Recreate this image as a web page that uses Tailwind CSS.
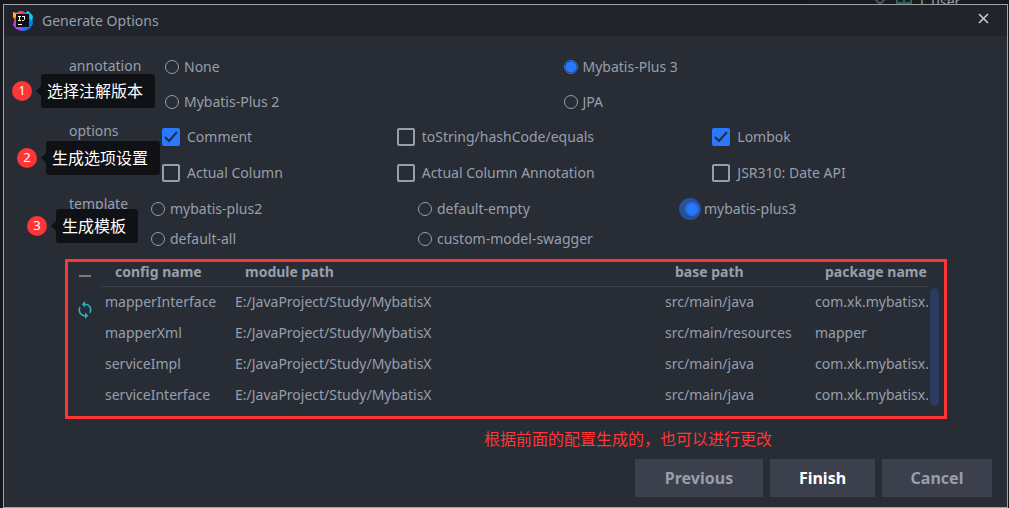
<!DOCTYPE html>
<html lang="zh-CN">
<head>
  <meta charset="UTF-8">
  <meta name="viewport" content="width=device-width, initial-scale=1.0">
  <title>Generate Options</title>
  <script src="https://cdn.jsdelivr.net/npm/@tailwindcss/browser@4"></script>
  <style>
    body {
      font-family: 'Noto Sans', 'Noto Sans CJK SC', sans-serif;
    }
    .radio {
      appearance: none;
      flex: none;
      width: 14px;
      height: 14px;
      border: 1px solid #979fad;
      border-radius: 50%;
    }
    .radio:checked {
      border-color: #2979ff;
      background: radial-gradient(circle, #2979ff 5px, transparent 6px);
    }
    .radio.focused {
      box-shadow: -2px 0 0 4px #27519d;
      background-color: #27519d;
    }
    .check {
      appearance: none;
      width: 18px;
      height: 18px;
      border: 2px solid #979fad;
      border-radius: 2px;
    }
    .check:checked {
      border-color: #2979ff;
      background: #2979ff;
    }
    /* callout bubbles */
    .tip::before {
      content: '';
      position: absolute;
      left: -5px;
      top: 12px;
      border: 5px solid transparent;
      border-left: 0;
      border-right-color: #101114;
    }
  </style>
</head>
<body class="flex min-h-screen flex-col overflow-hidden bg-[#15171c] pt-1 pr-px pl-[3px] text-sm leading-5 text-[#979fad]">
  <!-- editor tree behind the dialog -->
  <div class="absolute top-0 right-0 left-[808px] h-1 overflow-hidden bg-[#191b20]" aria-hidden="true">
    <svg class="absolute top-0 left-[66px] h-1 w-10" viewBox="0 0 40 4" fill="none" stroke-width="2">
      <path d="M1-1l5 5 5-5" stroke="#50535a" />
      <path d="M23 0v4M30 0v4M37 0v4M22 3h16" stroke="#2c6158" />
    </svg>
    <span class="absolute -top-2 left-28">t_user</span>
  </div>

  <div class="relative flex flex-1 flex-col border border-[#a3a3a5] bg-[#282c34]" role="dialog" aria-labelledby="title">
    <header class="flex h-[31px] items-center bg-[#21242b] pr-[14px] pl-2">
      <svg class="h-[22px] w-[22px]" viewBox="0 0 22 22">
        <path d="M1 2l4 1 3-2 6 2-4 14-8-3 1-4-2-3z" fill="#fc801d" />
        <path d="M1 2l3 2 2-2 1 3-4 3-2-1z" fill="#fdb42b" />
        <path d="M6 2l5-1 3 3-8 5-2 6-3 1 1-5z" fill="#fb3a6c" />
        <path d="M1 15l4-6 7 8 2 3-4 1-6-2z" fill="#9a4cf0" />
        <path d="M12 3l4-2 4 4 1 9-4 5-5 2-3-4z" fill="#087cfa" />
        <path d="M14 3l2-2 5 5-1 5-4-4z" fill="#12c7e8" />
        <path d="M4 4h13v13H4z" fill="#101010" />
        <path d="M6 6.500h3M7.500 6v5M6 10.500h3M10 6.500h3M12.500 6v3.500l-1 1H10M6 14.500h4" fill="none" stroke="#fff" />
      </svg>
      <h1 id="title" class="ml-2">Generate Options</h1>
      <button type="button" aria-label="Close" class="ml-auto -mt-1 p-1">
        <svg class="h-[11px] w-[11px]" viewBox="0 0 11 11" fill="none" stroke="#c9cdd4" stroke-width="1.500"><path d="M1 1l9 9M10 1l-9 9" /></svg>
      </button>
    </header>

    <form class="flex flex-1 flex-col pt-[13px] text-sm">
      <fieldset class="relative flex pr-[45px] pl-[65px]">
        <legend class="float-left w-24 pt-[7px]">annotation</legend>
        <div class="grid flex-1 auto-rows-[35px] grid-cols-2 items-center">
          <label class="flex items-center gap-[5px]"><input type="radio" name="annotation" class="radio">None</label>
          <label class="flex items-center gap-[5px]"><input type="radio" name="annotation" class="radio" checked>Mybatis-Plus 3</label>
          <label class="flex items-center gap-[5px]"><input type="radio" name="annotation" class="radio">Mybatis-Plus 2</label>
          <label class="flex items-center gap-[5px]"><input type="radio" name="annotation" class="radio">JPA</label>
        </div>
        <div class="absolute top-[25px] left-2 flex items-center gap-[9px] text-white">
          <span class="h-5 w-5 rounded-full bg-[#ff3636] text-center text-[13px]">1</span>
          <span class="tip relative rounded-[3px] bg-[#101114] py-[7px] pr-3 pl-[6px] text-base leading-5">选择注解版本</span>
        </div>
      </fieldset>

      <fieldset class="relative flex pr-[43px] pl-[65px]">
        <legend class="float-left w-[93px] pt-[2px]">options</legend>
        <div class="grid flex-1 auto-rows-[36px] grid-cols-[235fr_316fr_252fr] items-center">
          <label class="flex items-center gap-[7px]">
            <span class="relative flex"><input type="checkbox" class="check" checked><svg class="absolute top-[3px] left-[2px] h-3 w-[14px]" viewBox="0 0 14 12" fill="none" stroke="#282c34" stroke-width="2"><path d="M1 6l4 4 8-9" /></svg></span>Comment
          </label>
          <label class="flex items-center gap-[7px]"><input type="checkbox" class="check">toString/hashCode/equals</label>
          <label class="flex items-center gap-[7px]">
            <span class="relative flex"><input type="checkbox" class="check" checked><svg class="absolute top-[3px] left-[2px] h-3 w-[14px]" viewBox="0 0 14 12" fill="none" stroke="#282c34" stroke-width="2"><path d="M1 6l4 4 8-9" /></svg></span>Lombok
          </label>
          <label class="flex items-center gap-[7px]"><input type="checkbox" class="check">Actual Column</label>
          <label class="flex items-center gap-[7px]"><input type="checkbox" class="check">Actual Column Annotation</label>
          <label class="flex items-center gap-[7px]"><input type="checkbox" class="check">JSR310: Date API</label>
        </div>
        <div class="absolute top-[22px] left-[13px] flex items-center gap-[9px] text-white">
          <span class="h-5 w-5 rounded-full bg-[#ff3636] text-center text-[13px]">2</span>
          <span class="tip relative rounded-[3px] bg-[#101114] py-[7px] pr-3 pl-[6px] text-base leading-5">生成选项设置</span>
        </div>
      </fieldset>

      <fieldset class="relative mt-[3px] flex pr-[55px] pl-[65px]">
        <legend class="float-left w-[82px]">template</legend>
        <div class="grid flex-1 auto-rows-[30px] grid-cols-3 items-center">
          <label class="flex items-center gap-[5px]"><input type="radio" name="template" class="radio">mybatis-plus2</label>
          <label class="flex items-center gap-[5px]"><input type="radio" name="template" class="radio">default-empty</label>
          <label class="flex items-center gap-[5px]"><input type="radio" name="template" class="radio focused" checked>mybatis-plus3</label>
          <label class="flex items-center gap-[5px]"><input type="radio" name="template" class="radio">default-all</label>
          <label class="flex items-center gap-[5px]"><input type="radio" name="template" class="radio">custom-model-swagger</label>
        </div>
        <div class="absolute top-[15px] left-[23px] flex items-center gap-[9px] text-white">
          <span class="h-5 w-5 rounded-full bg-[#ff3636] text-center text-[13px]">3</span>
          <span class="tip relative rounded-[3px] bg-[#101114] py-[7px] pr-3 pl-[6px] text-base leading-5">生成模板</span>
        </div>
      </fieldset>

      <section class="mt-[5px] mr-[60px] ml-[61px] flex border-[3px] border-[#ff3636]">
        <div class="flex w-[33px] flex-none flex-col items-center gap-6 pt-[13px]">
          <button type="button" aria-label="Remove" class="h-[2px] w-3 bg-[#777a80]"></button>
          <button type="button" aria-label="Refresh">
            <svg class="h-[18px] w-[14px]" viewBox="4 1 16 22" fill="#35adb5">
              <path d="M12 4V1L8 5l4 4V6c3.300 0 6 2.700 6 6 0 1-.3 2-.7 2.800l1.500 1.500C19.500 15 20 13.600 20 12c0-4.400-3.600-8-8-8zM12 18c-3.300 0-6-2.700-6-6 0-1 .3-2 .7-2.800L5.200 7.700C4.500 9 4 10.400 4 12c0 4.400 3.600 8 8 8v3l4-4-4-4z" />
            </svg>
          </button>
        </div>
        <div class="min-w-0 flex-1 overflow-hidden pb-[6px]">
          <table class="w-full table-fixed text-left whitespace-nowrap">
            <colgroup><col class="w-[130px]"><col><col class="w-[150px]"><col class="w-[117px]"></colgroup>
            <thead class="h-6 border-b border-[#3c3f4c]">
              <tr>
                <th class="pb-[3px] pl-[14px]">config name</th>
                <th class="pb-[3px] pl-[14px]">module path</th>
                <th class="pb-[3px] pl-[14px]">base path</th>
                <th class="pb-[3px] pl-[14px]">package name</th>
              </tr>
            </thead>
            <tbody>
              <tr class="h-[31px]"><td class="pl-1">mapperInterface</td><td class="pl-1">E:/JavaProject/Study/MybatisX</td><td class="pl-1">src/main/java</td><td class="overflow-hidden pl-1">com.xk.mybatisx.</td></tr>
              <tr class="h-[31px]"><td class="pl-1">mapperXml</td><td class="pl-1">E:/JavaProject/Study/MybatisX</td><td class="pl-1">src/main/resources</td><td class="overflow-hidden pl-1">mapper</td></tr>
              <tr class="h-[31px]"><td class="pl-1">serviceImpl</td><td class="pl-1">E:/JavaProject/Study/MybatisX</td><td class="pl-1">src/main/java</td><td class="overflow-hidden pl-1">com.xk.mybatisx.s</td></tr>
              <tr class="h-[31px]"><td class="pl-1">serviceInterface</td><td class="pl-1">E:/JavaProject/Study/MybatisX</td><td class="pl-1">src/main/java</td><td class="overflow-hidden pl-1">com.xk.mybatisx.s</td></tr>
            </tbody>
          </table>
        </div>
        <div class="mt-[26px] mr-[5px] mb-[10px] ml-[2px] w-[9px] rounded-full bg-[#2a3b60]"></div>
      </section>

      <p class="mt-[10px] ml-[245px] text-center text-base leading-5 text-[#ff3636]">根据前面的配置生成的，也可以进行更改</p>

      <div class="mt-auto mr-[15px] mb-[10px] flex justify-end gap-[7px] text-base font-bold">
        <button type="button" class="h-[38px] w-32 bg-[#3c3f4c]">Previous</button>
        <button type="button" class="h-[38px] w-[105px] bg-[#3c3f4c] text-white">Finish</button>
        <button type="button" class="h-[38px] w-[110px] bg-[#3c3f4c]">Cancel</button>
      </div>
    </form>
  </div>
</body>
</html>
